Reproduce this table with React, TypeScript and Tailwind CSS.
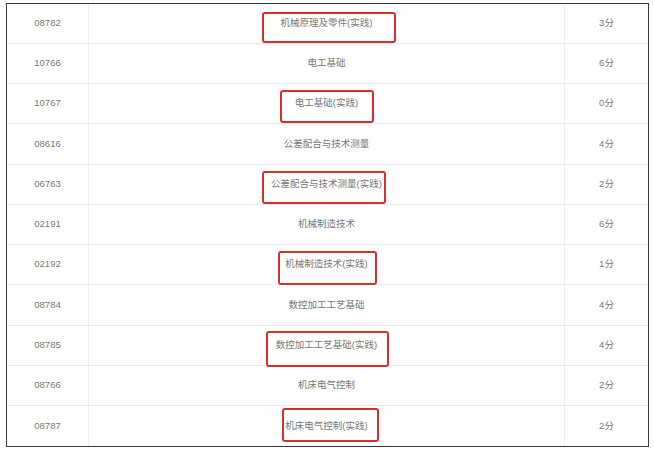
const rows = [
  { code: '08782', name: '机械原理及零件(实践)', credit: '3分' },
  { code: '10766', name: '电工基础', credit: '6分' },
  { code: '10767', name: '电工基础(实践)', credit: '0分' },
  { code: '08616', name: '公差配合与技术测量', credit: '4分' },
  { code: '06763', name: '公差配合与技术测量(实践)', credit: '2分' },
  { code: '02191', name: '机械制造技术', credit: '6分' },
  { code: '02192', name: '机械制造技术(实践)', credit: '1分' },
  { code: '08784', name: '数控加工工艺基础', credit: '4分' },
  { code: '08785', name: '数控加工工艺基础(实践)', credit: '4分' },
  { code: '08766', name: '机床电气控制', credit: '2分' },
  { code: '08787', name: '机床电气控制(实践)', credit: '2分' },
];

// hand-drawn red marks, page coordinates
const marks = [
  'left-[262px] top-[12px] w-[134px] h-[31px]',
  'left-[280px] top-[90px] w-[94px] h-[33px]',
  'left-[262px] top-[171px] w-[124px] h-[33px]',
  'left-[278px] top-[251px] w-[99px] h-[34px]',
  'left-[266px] top-[331px] w-[123px] h-[36px]',
  'left-[282px] top-[408px] w-[97px] h-[34px]',
];

export default function App() {
  return (
    <div className="relative w-[654px] h-[454px] bg-white overflow-hidden" style={{ fontFamily: '"Liberation Sans", "Noto Sans CJK SC", sans-serif' }}>
      <div className="ml-[6px] mt-[3px] w-[643px] border border-[#3a3a3a] text-[9.5px] text-[#777]">
        {rows.map((r, i) => (
          <div
            key={r.code}
            className={`flex ${i === 3 || i === 7 ? 'h-[41px]' : 'h-[40px]'} ${i < rows.length - 1 ? 'border-b border-[#e8e8e8]' : ''}`}
          >
            <div className="w-[82px] flex items-center justify-center border-r border-[#efefef]">{r.code}</div>
            <div className="flex-1 flex items-center justify-center border-r border-[#efefef]">{r.name}</div>
            <div className="w-[83px] flex items-center justify-center">{r.credit}</div>
          </div>
        ))}
      </div>
      {marks.map(m => (
        <div key={m} className={`absolute ${m} border-2 border-[#d4302c] rounded-[3px]`} />
      ))}
    </div>
  );
}
